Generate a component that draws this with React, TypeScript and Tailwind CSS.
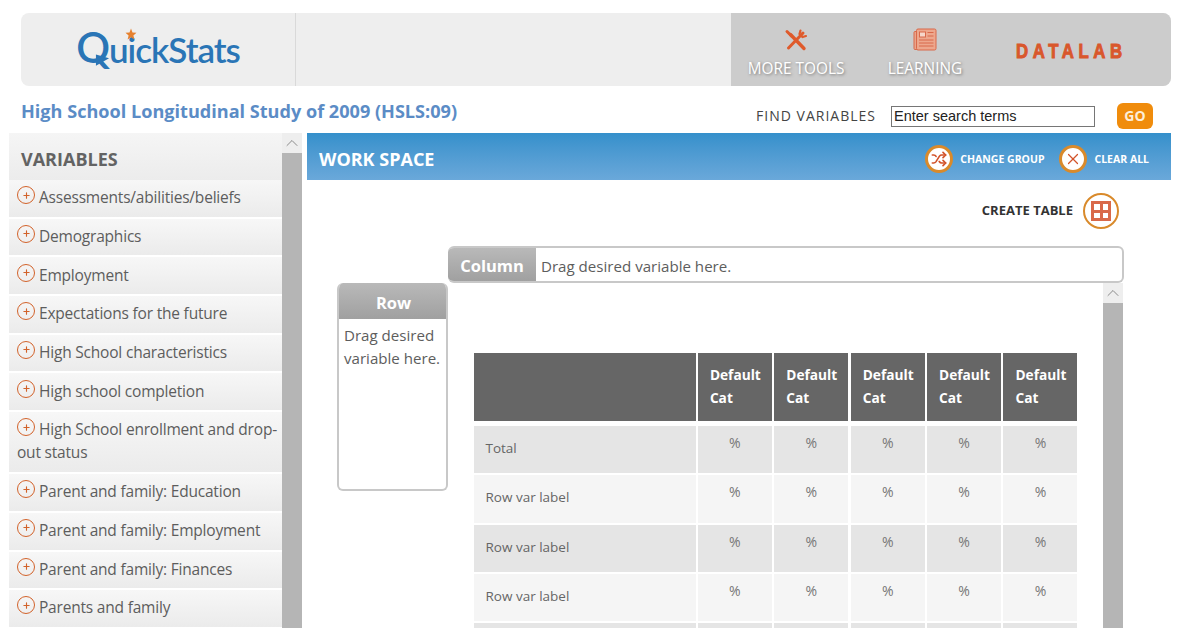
import { ChevronUp, Plus, Shuffle, X } from "lucide-react"

const variables = [
  "Assessments/abilities/beliefs",
  "Demographics",
  "Employment",
  "Expectations for the future",
  "High School characteristics",
  "High school completion",
  "High School enrollment and drop-out status",
  "Parent and family: Education",
  "Parent and family: Employment",
  "Parent and family: Finances",
  "Parents and family",
]

const cats = [0, 1, 2, 3, 4]
const rows = ["Total", "Row var label", "Row var label", "Row var label", ""]

function ScrollArrow() {
  return (
    <div className="flex h-5 items-center justify-center bg-[#eeeeee] text-[#777777]">
      <ChevronUp size={20} strokeWidth={1} />
    </div>
  )
}

function ToolsIcon() {
  return (
    <svg className="h-[24px] w-[24px]" viewBox="0 0 24 24" fill="none" stroke="#df5a2b" strokeLinecap="round">
      <path d="M6.5 6.5 20 20.5" strokeWidth="3.4" />
      <path d="M3 3.5 7.5 8" strokeWidth="3" />
      <path d="M19 5 4.5 20" strokeWidth="3" />
      <path d="M16.5 2.5l-1 3.5 3 3 3.5-1" strokeWidth="2.2" />
    </svg>
  )
}

function NewsIcon() {
  return (
    <svg className="h-[24px] w-[24px]" viewBox="0 0 24 24" fill="none" stroke="#d9694a" strokeWidth="1">
      <rect x="1" y="3.5" width="4" height="18" rx="1" fill="#e9a48b" />
      <rect x="3.5" y="1" width="19.5" height="21" rx="1.5" fill="#eda78d" />
      <rect x="6.5" y="4" width="6" height="5" fill="#f6d6c9" />
      <path d="M14.5 4.5h6M14.5 8h6M6 12h14.5M6 15h14.5M6 18h14.5" />
    </svg>
  )
}

function Logo() {
  return (
    <div className="flex h-full w-[275px] items-center justify-center border-r border-[#d9d9d9]">
      <div className="relative -mt-[5px] font-['Lato',sans-serif] text-[35px] font-semibold leading-none tracking-[-1px] text-[#2a75b6]">
        <span className="text-[42px] leading-none">Q</span>uickStats
        <svg className="absolute left-[49px] top-[2px] h-[12px] w-[12px]" viewBox="0 0 24 24">
          <path d="M12 1l3 8 8 .6-6.2 5.2 2 8.2-6.8-4.5L5.2 23l2-8.2L1 9.6 9 9z" fill="#e6812f" />
        </svg>
        <svg className="absolute left-[19px] top-[27px] h-[14px] w-[15px]" viewBox="0 0 16 14">
          <path d="M1 1l14 4-14 8z" fill="#2a75b6" />
        </svg>
      </div>
    </div>
  )
}

export default function App() {
  return (
    <div className="flex h-[628px] w-[1200px] flex-col overflow-hidden bg-white font-['Open_Sans',sans-serif]">
      <div className="ml-[21px] mt-[13px] flex h-[73px] w-[1150px] shrink-0 overflow-hidden rounded-lg bg-[#eeeeee]">
        <Logo />
        <div className="flex-1" />
        <div className="flex w-[440px] bg-[#cccccc]">
          <div className="ml-[18px] flex w-[94px] flex-col items-center pt-[15px]">
            <ToolsIcon />
            <span className="mt-[7px] whitespace-nowrap text-[15.4px] leading-5 text-white [text-shadow:1px_1px_3px_#777777]">MORE TOOLS</span>
          </div>
          <div className="ml-[45px] flex w-[74px] flex-col items-center pt-[15px]">
            <NewsIcon />
            <span className="mt-[7px] whitespace-nowrap text-[15.4px] leading-5 text-white [text-shadow:1px_1px_3px_#777777]">LEARNING</span>
          </div>
          <div className="ml-[54px] origin-left scale-x-[0.8] whitespace-nowrap pt-[24px] font-['Liberation_Sans',sans-serif] text-[21px] font-bold leading-7 tracking-[5.7px] text-[#d9572c] [-webkit-text-stroke:1px_#d9572c]">DATALAB</div>
        </div>
      </div>

      <div className="flex h-[47px] w-[1153px] shrink-0 items-center pl-[21px]">
        <h1 className="mt-[5px] text-[18.1px] font-bold text-[#5b8cc6]">High School Longitudinal Study of 2009 (HSLS:09)</h1>
        <span className="ml-auto mt-[12px] text-[14px] tracking-[1px] text-[#444444]">FIND VARIABLES</span>
        <input
          readOnly
          value="Enter search terms"
          className="ml-[15px] mt-[13px] h-[21px] w-[204px] border border-[#767676] pl-[2px] pt-[1px] font-['Liberation_Sans',sans-serif] text-[14.5px] text-[#222222]"
        />
        <button className="ml-[22px] mt-[13px] h-[26px] w-[36px] rounded-md bg-[#f08c0c] pb-[2px] text-[14px] font-bold text-[#fdeed8]">GO</button>
      </div>

      <div className="flex min-h-0 flex-1 pl-[9px] pr-[29px]">
        <aside className="flex w-[293px] shrink-0 overflow-hidden">
          <div className="w-[273px] shrink-0">
            <div className="flex h-[47px] items-center bg-gradient-to-b from-[#f5f5f5] to-[#ececec] pl-[12px] pt-[5px] text-[18px] font-bold text-[#636363]">VARIABLES</div>
            <div className="flex flex-col gap-[2px]">
              {variables.map((name, i) => (
                <div
                  key={name}
                  className={`bg-gradient-to-b from-[#f7f7f7] to-[#ebebeb] pl-[8px] pr-[2px] pt-[6.3px] text-[15.5px] leading-[23px] tracking-[-0.2px] text-[#5d5d5d] ${i === 6 ? "h-[60px]" : "h-[36.7px]"}`}
                >
                  <span className="mr-[4px] inline-flex h-[18px] w-[18px] -translate-y-[4px] items-center justify-center rounded-full border-[1.5px] border-[#d2622a] align-middle text-[#d2622a]">
                    <Plus size={9} strokeWidth={3} />
                  </span>
                  {name}
                </div>
              ))}
            </div>
          </div>
          <div className="w-[20px] shrink-0 bg-[#b5b5b5]">
            <ScrollArrow />
          </div>
        </aside>

        <main className="ml-[5px] flex min-w-0 flex-1 flex-col">
          <div className="flex h-[47px] shrink-0 items-center bg-gradient-to-b from-[#3490cb] to-[#6aa8da] pl-[12px] pr-[22px] pt-[5px]">
            <span className="text-[18px] font-bold text-white">WORK SPACE</span>
            <span className="ml-auto flex h-[28px] w-[28px] items-center justify-center rounded-full border-[3px] border-[#d98a2b] bg-white text-[#d2532a]">
              <Shuffle size={16} strokeWidth={2.5} />
            </span>
            <span className="ml-[7px] pt-[1px] text-[10.5px] font-bold text-white">CHANGE GROUP</span>
            <span className="ml-[15px] flex h-[28px] w-[28px] items-center justify-center rounded-full border-[3px] border-[#d98a2b] bg-white text-[#d2532a]">
              <X size={18} strokeWidth={1.6} />
            </span>
            <span className="ml-[7px] pt-[1px] text-[10.5px] font-bold text-white">CLEAR ALL</span>
          </div>

          <div className="flex h-[66px] shrink-0 items-center justify-end pb-[4px] pr-[52px]">
            <span className="text-[13px] font-bold text-[#333333]">CREATE TABLE</span>
            <span className="ml-[10px] flex h-[36px] w-[36px] items-center justify-center rounded-full border-[2px] border-[#d98a2b]">
              <span className="grid h-[20px] w-[20px] grid-cols-2 gap-[3px] border-[3px] border-[#d9694a] bg-[#d9694a]">
                <span className="bg-white" />
                <span className="bg-white" />
                <span className="bg-white" />
                <span className="bg-white" />
              </span>
            </span>
          </div>

          <div className="flex min-h-0 flex-1 pl-[30px]">
            <div className="w-[111px] shrink-0 pt-[37px]">
              <div className="h-[208px] w-[111px] overflow-hidden rounded-md border-2 border-t-0 border-[#c8c8c8]">
                <div className="flex h-[36px] items-center justify-center bg-gradient-to-b from-[#b9b9b9] to-[#a0a0a0] pl-[2px] pt-[4px] text-[16.5px] font-bold text-white">Row</div>
                <div className="pl-[5px] pt-[5px] text-[15.1px] leading-[23px] text-[#5d5d5d]">Drag desired variable here.</div>
              </div>
            </div>
            <div className="flex w-[676px] shrink-0 flex-col">
              <div className="flex h-[37px] shrink-0 overflow-hidden rounded-md border-2 border-l-0 border-[#c8c8c8]">
                <div className="flex w-[88px] items-center justify-center bg-gradient-to-b from-[#b9b9b9] to-[#a0a0a0] pt-[3px] text-[16.5px] font-bold text-white">Column</div>
                <div className="flex items-center pl-[5px] pt-[4px] text-[15.1px] text-[#5d5d5d]">Drag desired variable here.</div>
              </div>
              <div className="flex min-h-0 flex-1">
                <div className="w-[655px] shrink-0 pl-[25.5px] pt-[70px]">
                  <div className="grid w-[604px] grid-cols-[222px_repeat(5,74px)] gap-x-[2.4px]">
                    <div className="mb-[5px] h-[68px] bg-[#666666]" />
                    {cats.map((c) => (
                      <div key={c} className="mb-[5px] h-[68px] bg-[#666666] pl-[12px] pt-[10px] text-[13.7px] font-bold leading-[23px] text-white">
                        Default Cat
                      </div>
                    ))}
                    {rows.map((label, i) => (
                      <div key={i} className="contents">
                        <div className={`mb-[2px] flex h-[47.3px] items-center pb-[3px] pl-[12px] text-[13.5px] text-[#666666] ${i % 2 === 0 ? "bg-[#e5e5e5]" : "bg-[#f5f5f5]"}`}>
                          {label}
                        </div>
                        {cats.map((c) => (
                          <div key={c} className={`mb-[2px] h-[47.3px] pt-[6px] text-center text-[14px] text-[#777777] ${i % 2 === 0 ? "bg-[#e5e5e5]" : "bg-[#f5f5f5]"}`}>
                            {label ? "%" : ""}
                          </div>
                        ))}
                      </div>
                    ))}
                  </div>
                </div>
                <div className="w-[20px] shrink-0 bg-[#b5b5b5]">
                  <ScrollArrow />
                </div>
              </div>
            </div>
          </div>
        </main>
      </div>
    </div>
  )
}
